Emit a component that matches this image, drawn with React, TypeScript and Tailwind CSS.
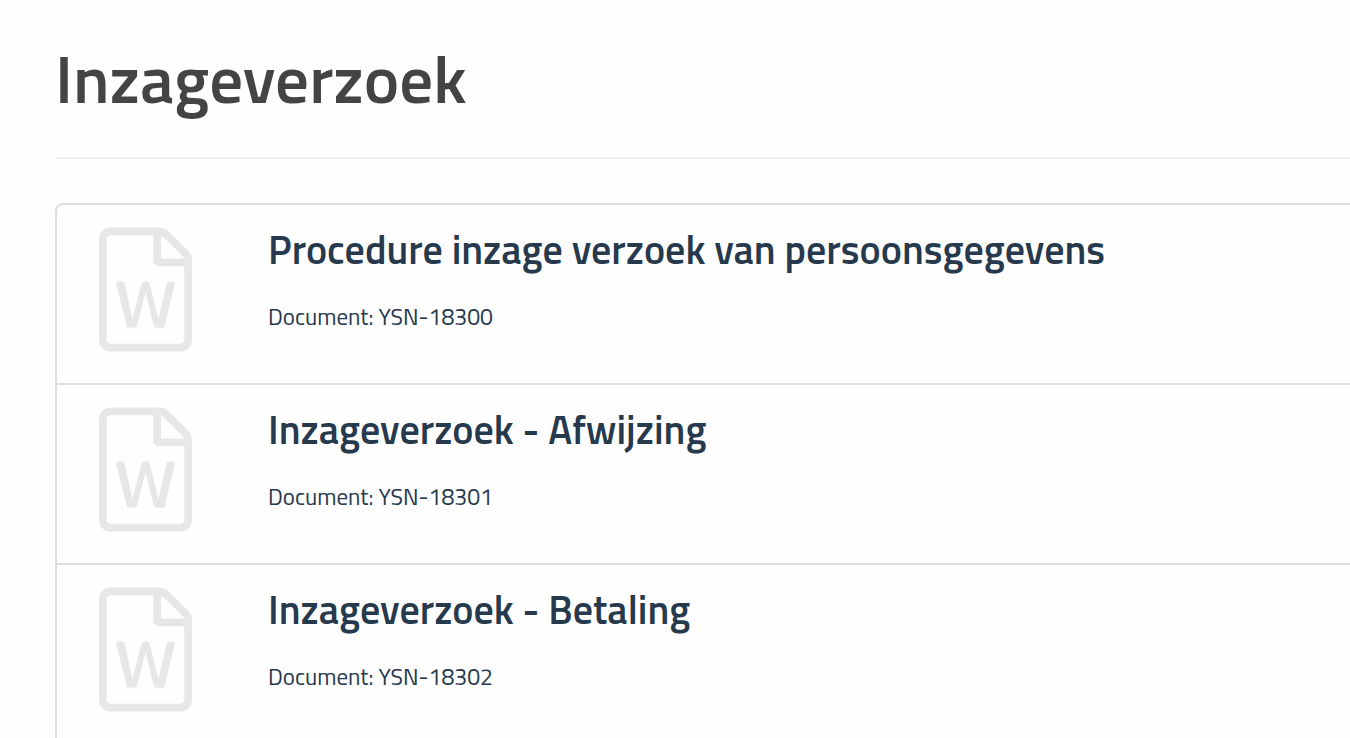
interface DocumentData {
  id: string;
  title: string;
}

const documents: DocumentData[] = [
  { id: "YSN-18300", title: "Procedure inzage verzoek van persoonsgegevens" },
  { id: "YSN-18301", title: "Inzageverzoek - Afwijzing" },
  { id: "YSN-18302", title: "Inzageverzoek - Betaling" },
];

function WordFileIcon() {
  return (
    <svg
      className="h-[125px] w-[93px] shrink-0 text-[#e7e7e7]"
      viewBox="0 0 384 512"
      fill="currentColor"
      aria-hidden="true"
    >
      <path d="M369.9 98 286 14.1C277 5.1 264.8 0 252.1 0H48C21.5 0 0 21.6 0 48v416c0 26.5 21.5 48 48 48h288c26.5 0 48-21.5 48-48V132c0-12.7-5.1-25-14.1-34zM256 32.6c2.8.7 5.3 2.1 7.4 4.2l83.9 83.9c2.1 2.1 3.5 4.6 4.2 7.4H256V32.6zM352 464c0 8.8-7.2 16-16 16H48c-8.8 0-16-7.2-16-16V48c0-8.8 7.2-16 16-16h176v104c0 13.3 10.7 24 24 24h104v304z" />
      <path d="M83 223h12c6 0 10 3 11 9l32 146 37-146c2-6 6-9 11-9h12c6 0 10 3 11 9l37 146 33-146c1-6 5-9 11-9h11c8 0 13 6 11 14l-40 168c-2 6-6 9-11 9h-24c-6 0-9-3-11-9l-34-136-35 136c-2 6-6 9-11 9h-21c-6 0-9-3-11-9L72 237c-2-8 3-14 11-14z" />
    </svg>
  );
}

function DocumentItem({ id, title }: DocumentData) {
  return (
    <li>
      <a href={`#${id}`} className="flex gap-[76px] px-[42px] pt-[22px] pb-[31px]">
        <WordFileIcon />
        <div>
          <h2 className="text-[40px] leading-[46px] font-semibold">{title}</h2>
          <p className="mt-[28px] text-[23px] leading-[32px]">Document: {id}</p>
        </div>
      </a>
    </li>
  );
}

export default function App() {
  return (
    <main className="min-h-screen bg-[#fefefe] pl-[55px] font-['Titillium_Web','Noto_Sans',sans-serif] text-[#26394d]">
      <header className="border-b-2 border-[#eeeeee] pt-[30px] pb-[31px]">
        <h1 className="text-[67px] leading-[96px] font-semibold text-[#444444]">
          Inzageverzoek
        </h1>
      </header>
      <ul className="mt-[44px] divide-y-2 divide-[#dddddd] rounded-tl-[8px] border-t-2 border-l-2 border-[#dddddd]">
        {documents.map((doc) => (
          <DocumentItem key={doc.id} {...doc} />
        ))}
      </ul>
    </main>
  );
}
